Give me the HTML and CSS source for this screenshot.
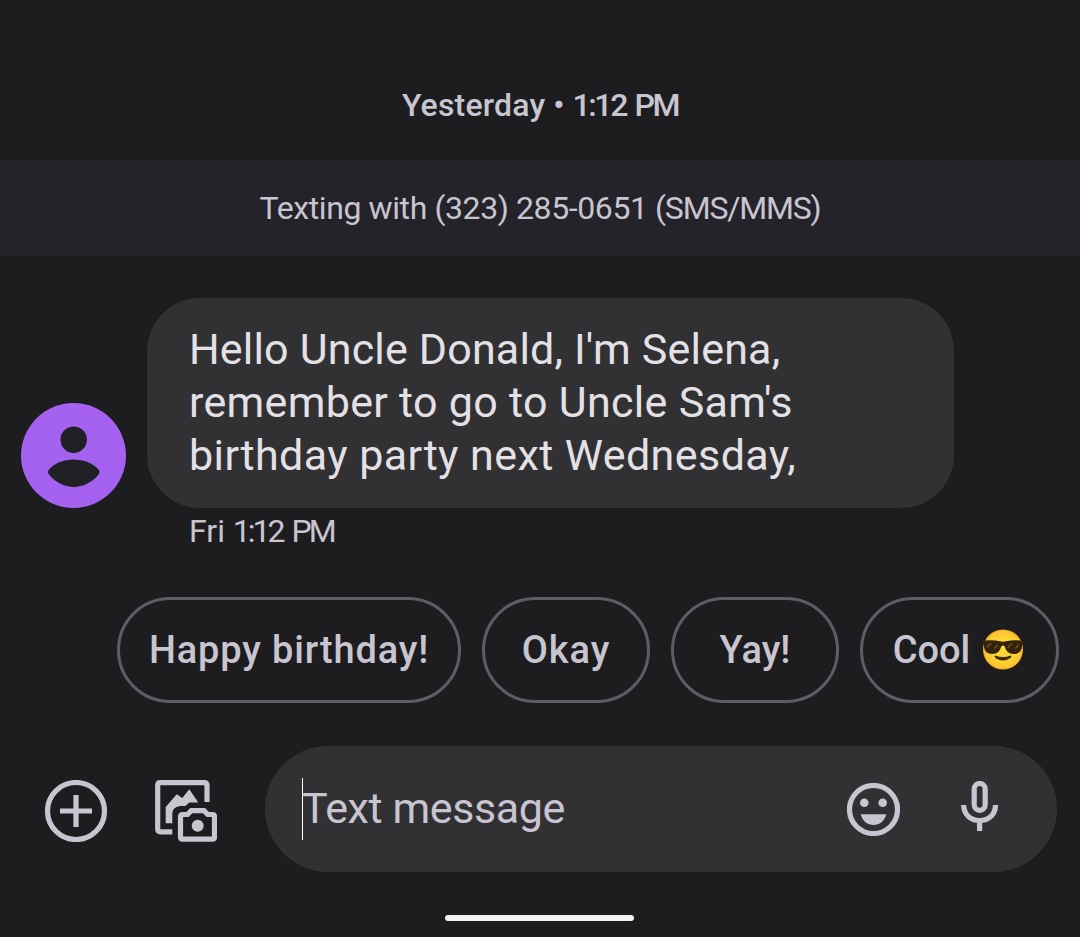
FILE: index.html
```html
<!DOCTYPE html>
<html lang="en">
  <head>
    <meta charset="UTF-8" />
    <meta name="viewport" content="width=device-width, initial-scale=1.0" />
    <title>Messages</title>
    <link rel="stylesheet" href="styles.css">
  </head>
  <body>
    <div class="screen">
      <div class="date">
        <span class="day">Yesterday</span>
        <span class="dot">•</span>
        <span class="hour">1:12 PM</span>
      </div>
      <div class="banner"><span>Texting with (323) 285-0651 <span class="kind">(SMS/MMS)</span></span></div>

      <div class="message">
        <svg class="avatar" viewBox="0 0 105 105">
          <circle cx="52.5" cy="52.5" r="52.5" fill="#a561f0" />
          <circle cx="52.7" cy="36.7" r="13.2" />
          <path d="M28 66.500C39 53 66 53 77.500 66.500Q79.500 69 77.500 71.500C64 88 41.500 88 28 71.500Q26 69 28 66.500Z" />
        </svg>
        <div class="bubble">
          <span class="line line-1">Hello Uncle Donald, I'm Selena,</span>
          <span class="line line-2">remember to go to Uncle Sam's</span>
          <span class="line line-3">birthday party next Wednesday,</span>
        </div>
      </div>
      <div class="time">Fri <span class="hour">1:12 PM</span></div>

      <div class="replies">
        <button class="reply reply-birthday">Happy birthday!</button>
        <button class="reply reply-okay">Okay</button>
        <button class="reply reply-yay">Yay!</button>
        <button class="reply reply-cool">
          <span>Cool</span>
          <svg class="emoji" viewBox="0 0 42 42">
            <defs>
              <radialGradient id="face" cx="50%" cy="50%" r="50%">
                <stop offset="0.5" stop-color="#fdd835" />
                <stop offset="0.9" stop-color="#fbc52f" />
                <stop offset="1" stop-color="#f3a62b" />
              </radialGradient>
            </defs>
            <circle cx="21" cy="20.5" r="20" fill="url(#face)" />
            <path d="M13.500 26.500Q21 29.500 28.500 26.500Q30 26.500 29.300 28C26 32.500 16 32.500 12.700 28Q12 26.500 13.500 26.500Z" fill="#422b0d" />
            <path d="M.3 11.800Q10 10.300 18 12.300Q21 13 24 12.300Q32 10.300 41.700 11.800V14.500L40.300 15.800C39.800 22.500 37 25 31.500 25C26.500 25 24 22 22.800 17.500Q21 15.500 19.200 17.500C18 22 15.500 25 10.500 25C5 25 2.200 22.500 1.700 15.800L.3 14.500Z" fill="#35220b" />
            <path d="M5 17L8 14H10L5 19.500ZM12.500 18L16 14.500L15 18L12 20.500ZM26 17L29 14H31L26 19.500ZM33.500 18L37 14.500L36 18L33 20.500Z" fill="#6b4f25" />
          </svg>
        </button>
      </div>

      <div class="composer">
        <svg class="add-icon" viewBox="0 0 62 62">
          <circle cx="31" cy="31" r="28.500" />
          <path d="M31 15V47M15 31H47" />
        </svg>
        <svg class="gallery-icon" viewBox="0 0 62 62">
          <path class="stroke" d="M17.300 51.800H5.500Q2.700 51.800 2.700 49V5.500Q2.700 2.700 5.500 2.700H49Q52 2.700 52 5.500V22" />
          <path d="M10.700 43.300V27L21.700 14.300L27.300 18L34.300 9.300L43.300 22.500H34.300L30.500 26H25Q17.300 27 17.300 34V43.300Z" />
          <path class="stroke" d="M27.500 34.500H32.500L36.300 30.600H49L52.800 34.500H57.500Q59.500 34.500 59.500 36.500V57Q59.500 59.200 57.500 59.200H27.500Q25.500 59.200 25.500 57V36.500Q25.500 34.500 27.500 34.500Z" />
          <circle cx="42.700" cy="45.700" r="6" />
        </svg>
        <div class="field">
          <span class="cursor"></span>
          <span class="placeholder">Text message</span>
          <svg class="smile-icon" viewBox="0 0 53 53">
            <circle class="ring" cx="26.500" cy="26.500" r="24" />
            <circle cx="17.300" cy="19.700" r="4.300" />
            <circle cx="35.700" cy="19.700" r="4.300" />
            <path d="M13.700 31.200H39.300C37.500 38 32.500 42 26.500 42S15.500 38 13.700 31.200Z" />
          </svg>
          <svg class="mic-icon" viewBox="0 0 37 50">
            <rect x="13.200" y="2.500" width="11" height="26.800" rx="5.500" />
            <path d="M2.700 24C2.700 33.500 9.500 39.500 18.600 39.500S34.500 33.500 34.500 24M18.600 39V50" />
          </svg>
        </div>
      </div>
      <div class="home-bar"></div>
    </div>
  </body>
</html>
```
FILE: styles.css
```css
body {
  margin: 0;
  background-color: #1d1d1f;
  color: #c9c5d0;
  font-family: Roboto, sans-serif;
}

.screen {
  width: 1080px;
  height: 937px;
  overflow: hidden;
  display: flex;
  flex-direction: column;
}

.date {
  height: 110px;
  padding-top: 50px;
  display: flex;
  justify-content: center;
  align-items: center;
  gap: 8px;
  font-size: 32px;
  font-weight: 500;
}

.day {
  letter-spacing: 0.2px;
}

.hour {
  letter-spacing: -2.4px;
  word-spacing: 3px;
}

.banner {
  height: 94px;
  padding-bottom: 1px;
  border-top: 1px solid #201f24;
  background-color: #24232a;
  display: flex;
  justify-content: center;
  align-items: center;
  font-size: 32px;
  letter-spacing: -0.4px;
}

.banner .kind {
  letter-spacing: -1.2px;
}

.message {
  display: flex;
  align-items: flex-end;
  gap: 21px;
  padding: 42px 0 0 21px;
}

.avatar {
  width: 105px;
  height: 105px;
  fill: #202125;
}

.bubble {
  box-sizing: border-box;
  width: 807px;
  height: 210px;
  padding: 25px 42px;
  border-radius: 53px;
  background-color: #313133;
  color: #e4e1e6;
  font-size: 43px;
  line-height: 53px;
}

.line {
  display: block;
  white-space: nowrap;
}

.line-1 {
  letter-spacing: 0.18px;
}

.line-2 {
  letter-spacing: 0.3px;
}

.line-3 {
  letter-spacing: 0.43px;
}

.time {
  height: 46px;
  padding-left: 189px;
  font-size: 32px;
  line-height: 46px;
}

.time .hour {
  letter-spacing: -3px;
  word-spacing: 4px;
}

.replies {
  display: flex;
  gap: 21px;
  padding: 43px 0 0 117px;
}

.reply {
  box-sizing: border-box;
  height: 106px;
  width: 168px;
  flex-shrink: 0;
  padding: 0;
  display: flex;
  justify-content: center;
  align-items: center;
  border: 3px solid #5e5d66;
  border-radius: 53px;
  background: none;
  color: inherit;
  font-family: inherit;
  font-size: 38px;
  font-weight: 500;
  white-space: nowrap;
}

.reply-birthday {
  width: 344px;
  letter-spacing: 0.85px;
}

.reply-okay {
  letter-spacing: 0.9px;
}

.reply-cool {
  width: 199px;
  gap: 12px;
}

.emoji {
  width: 42px;
  height: 42px;
  margin-right: 2px;
}

.composer {
  display: flex;
  align-items: center;
  padding: 43px 0 0 45px;
}

.add-icon,
.gallery-icon {
  width: 62px;
  height: 62px;
  margin-top: 3px;
}

.add-icon {
  fill: none;
  stroke: #c9c5d0;
  stroke-width: 5.2;
}

.gallery-icon {
  margin-left: 48px;
  fill: #c9c5d0;
}

.gallery-icon .stroke {
  fill: none;
  stroke: #c9c5d0;
  stroke-width: 5.2;
}

.field {
  box-sizing: border-box;
  width: 792px;
  height: 126px;
  margin-left: 48px;
  padding: 0 59px 0 37px;
  display: flex;
  align-items: center;
  border-radius: 63px;
  background-color: #313133;
}

.cursor {
  width: 1px;
  height: 62px;
  background-color: #fff;
}

.placeholder {
  margin: 0 0 2px -1px;
  font-size: 43px;
  letter-spacing: -0.4px;
}

.smile-icon {
  width: 53px;
  height: 53px;
  margin-left: auto;
  fill: #c9c5d0;
}

.smile-icon .ring,
.mic-icon {
  fill: none;
  stroke: #c9c5d0;
  stroke-width: 5.2;
}

.mic-icon {
  width: 37px;
  height: 50px;
  margin: 0 0 6px 61px;
}

.home-bar {
  width: 189px;
  height: 6px;
  margin: 43px auto 0 445px;
  border-radius: 3px;
  background-color: #f2f2f2;
}
```
